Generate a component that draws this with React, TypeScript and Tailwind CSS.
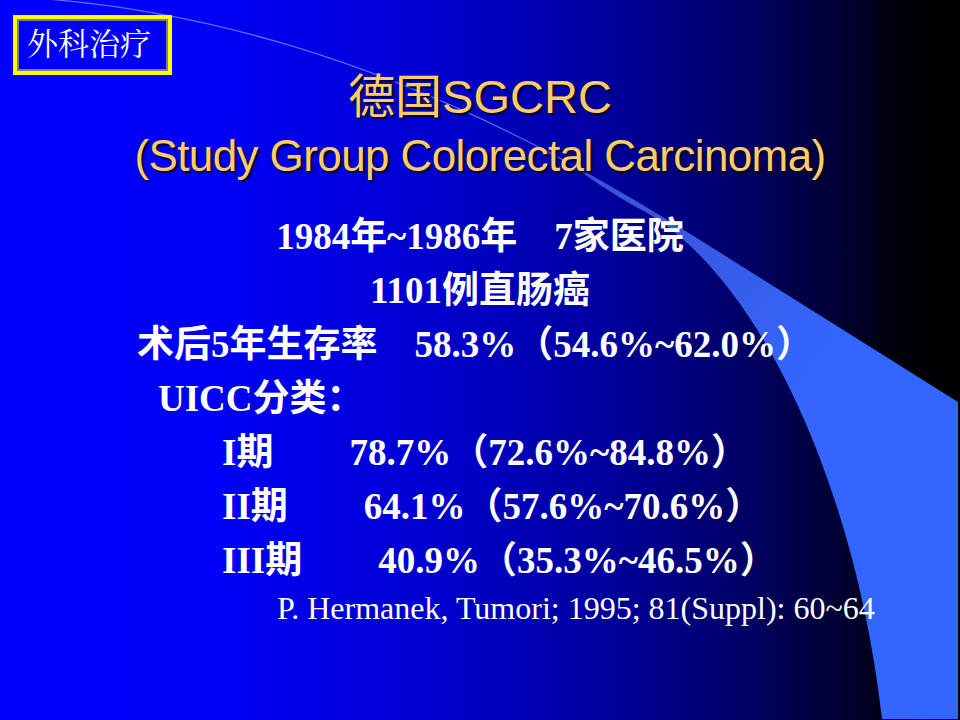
const serifCjk = "font-['Liberation_Serif','Noto_Sans_CJK_SC',serif]";

const Swoosh = () => (
  <svg className="absolute inset-0" width="960" height="720" viewBox="0 0 960 720" aria-hidden>
    <defs>
      <linearGradient id="wedge" gradientUnits="userSpaceOnUse" x1="560" y1="160" x2="820" y2="360">
        <stop offset="0" stopColor="#5f7cf2" stopOpacity="0.6" />
        <stop offset="0.45" stopColor="#3d60ea" stopOpacity="0.92" />
        <stop offset="1" stopColor="#3366ff" />
      </linearGradient>
    </defs>
    {/* faint arc from the top-left corner */}
    <path d="M -5 -4 C 199 3.2, 387 65.4, 566.7 161.7" fill="none" stroke="#7390ff" strokeOpacity="0.75" strokeWidth="1.3" />
    <path
      d="M 566.7 161.7 C 611.6 185.8, 656 212, 700 240 L 958 402 L 958 719 L 882 719 C 855 480, 755 270, 640 209 C 612 194, 590 178, 566.7 161.7 Z"
      fill="url(#wedge)"
    />
  </svg>
);

const stages = [
  { label: "I期", value: "78.7%（72.6%~84.8%）" },
  { label: "II期", value: "64.1%（57.6%~70.6%）" },
  { label: "III期", value: "40.9%（35.3%~46.5%）" },
];

export default function App() {
  return (
    <div className="relative h-[720px] w-[960px] overflow-hidden bg-[linear-gradient(to_right,#0000ff_0%,#0000f8_22%,#0000d0_45%,#00009a_64%,#000068_77%,#000030_88%,#000008_94%,#000000_100%)]">
      <Swoosh />
      <div className="relative flex flex-col">
        {/* section tag */}
        <div className="ml-[13px] mt-[15px] h-[60px] w-[159px] border-4 border-[#ffff00]">
          <div className="h-full border-2 border-[#7c7c9c] pl-[8px] font-['Noto_Serif_CJK_SC','Noto_Sans_CJK_SC',serif] text-[31px] leading-[42px] text-white">
            外科治疗
          </div>
        </div>

        <div className="-mt-[8px] text-center font-['Liberation_Sans','Noto_Sans_CJK_SC',sans-serif] text-[#ffcc66] [text-shadow:2px_2px_2px_#00002a]">
          <div className="text-[47px] leading-[59px]">德国SGCRC</div>
          <div className="text-[44px] leading-[60px] tracking-[-0.6px]">(Study Group Colorectal Carcinoma)</div>
        </div>

        <div className={`mt-[24px] ${serifCjk} text-[37px] font-bold leading-[54px] text-white [text-spacing-trim:space-all]`}>
          <div className="text-center">1984年~1986年　7家医院</div>
          <div className="text-center">1101例直肠癌</div>
          <div className="pl-[137px]">术后5年生存率　58.3%（54.6%~62.0%）</div>
          <div className="pl-[158px]">UICC分类：</div>
          {stages.map((s) => (
            <div key={s.label} className="flex pl-[222px]">
              <span>{s.label}</span>
              <span className="ml-[76px]">{s.value}</span>
            </div>
          ))}
        </div>

        <div className={`pl-[277px] ${serifCjk} text-[32px] leading-[40px] text-white`}>
          P. Hermanek, Tumori; 1995; 81(Suppl): 60~64
        </div>
      </div>
    </div>
  );
}
